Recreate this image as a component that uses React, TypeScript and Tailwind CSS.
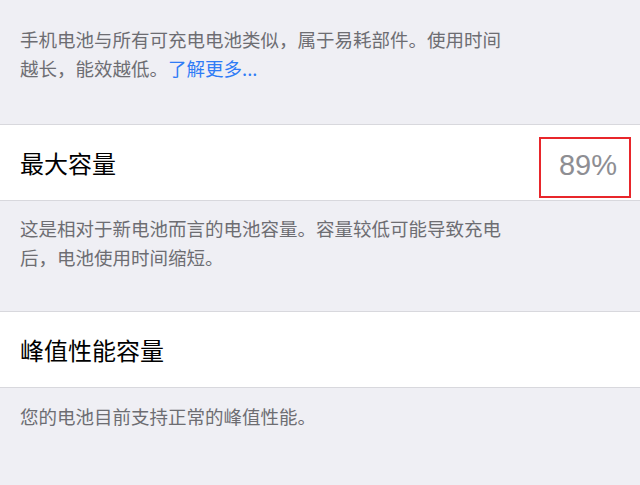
import React from 'react';

const cjk = "font-['Noto_Sans_CJK_SC','Noto_Sans',sans-serif]";

const Footer: React.FC<{ children: React.ReactNode; className?: string }> = ({ children, className }) => (
  <div className={`pl-5 ${className ?? ''}`}>
    <p className="w-[490px] text-[18.5px] leading-[29px] text-[#6d6d72]">{children}</p>
  </div>
);

const App: React.FC = () => {
  return (
    <div className={`w-[640px] h-[485px] overflow-hidden bg-[#efeff4] ${cjk}`}>
      {/* intro text */}
      <Footer className="pt-[25px] pb-[41px]">
        手机电池与所有可充电电池类似，属于易耗部件。使用时间越长，能效越低。
        <span className="text-[#2f7cf6]">了解更多...</span>
      </Footer>

      {/* max capacity */}
      <div className="flex h-[77px] items-stretch justify-between border-y border-[#d8d8dd] bg-white pl-5 pr-[9px]">
        <div className="flex items-center text-[24px] text-black">最大容量</div>
        <div className="mt-[12px] mb-[2px] flex w-[92px] items-center justify-end border-2 border-[#e8262b] pr-[12px] pb-[3px] font-['Liberation_Sans',sans-serif] text-[29px] text-[#8e8e93]">
          89%
        </div>
      </div>
      <Footer className="pt-[13px] pb-[39px]">
        这是相对于新电池而言的电池容量。容量较低可能导致充电后，电池使用时间缩短。
      </Footer>

      {/* peak performance */}
      <div className="flex h-[77px] items-center border-y border-[#d8d8dd] bg-white pl-5">
        <span className="text-[24px] text-black">峰值性能容量</span>
      </div>
      <Footer className="pt-[14px]">您的电池目前支持正常的峰值性能。</Footer>
    </div>
  );
};

export default App;
